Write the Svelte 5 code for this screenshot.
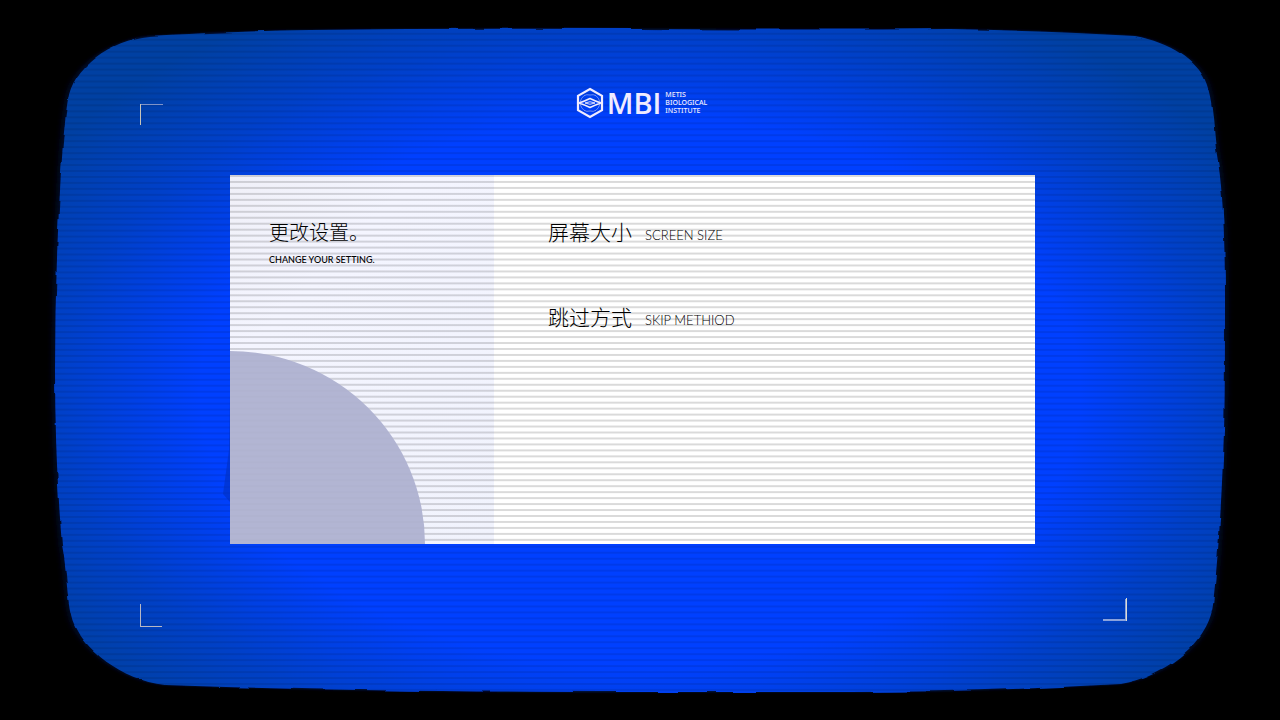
<script>
  const settings = [
    { label: '屏幕大小', note: 'SCREEN SIZE' },
    { label: '跳过方式', note: 'SKIP METHIOD' }
  ];
  // Raster lines, spaced like the rows of an old tube.
  const pitch = 5.965;
  const screenLines = Array.from({ length: 111 }, (_, i) => 32.8 + i * pitch);
  const panelLines = Array.from({ length: 62 }, (_, i) => i * pitch);
</script>

<div class="monitor">
  <svg class="layer" viewBox="0 0 1280 720" preserveAspectRatio="none" aria-hidden="true">
    <defs>
      <radialGradient id="glow" gradientUnits="userSpaceOnUse" cx="0" cy="0" r="1" gradientTransform="translate(640 392) scale(710 440)">
        <stop offset="0.62" stop-color="#0040ff" />
        <stop offset="0.82" stop-color="#0040c8" />
        <stop offset="1" stop-color="#0040a2" />
      </radialGradient>
      <filter id="ragged" x="-5%" y="-5%" width="110%" height="110%" color-interpolation-filters="sRGB">
        <feTurbulence type="fractalNoise" baseFrequency="0.02 0.06" numOctaves="2" seed="4" />
        <feDisplacementMap in="SourceGraphic" scale="4" xChannelSelector="R" yChannelSelector="G" />
      </filter>
      <filter id="soft" x="-5%" y="-5%" width="110%" height="110%">
        <feGaussianBlur stdDeviation="4 1" />
      </filter>
      <path id="tube" d="M150 36 C200 33 250 31 310 30 Q460 28 640 29 T950 29 Q1050 31 1135 36 C1170 42 1198 62 1205 80 C1214 100 1213 130 1217 155 Q1225 200 1225 300 T1224 430 Q1221 530 1213 605 C1208 645 1160 678 1120 684 Q980 692 850 692 T640 692 Q360 692 165 685 C120 680 84 648 74 624 C66 604 68 575 62 545 Q55 460 55 370 T60 190 Q63 130 68 100 C72 68 110 40 150 36 Z" />
    </defs>
    <use href="#tube" fill="#001a60" opacity="0.8" filter="url(#soft)" />
    <use href="#tube" fill="url(#glow)" filter="url(#ragged)" />
    <g opacity="0.08">
      {#each screenLines as y}
        <rect x="0" {y} width="1280" height="2" />
      {/each}
    </g>
    <g fill="none">
      <path d="M140 104.5H163" stroke="#7f93c8" />
      <path d="M140.500 104V125" stroke="#c8c4b8" />
      <path d="M140.500 604V627M140 626.500H162" stroke="#b8b8c4" />
      <path d="M1103 620H1127" stroke="#8aa2dc" stroke-width="2" />
      <path d="M1126.500 598V621" stroke="#dcdcd4" />
      <path d="M1125.500 599V621" stroke="#8aa2dc" />
    </g>
    <path d="M230 395 L229 450 L223 494 L230 502 Z" fill="#0030c0" opacity="0.6" />
  </svg>

  <header class="brand">
    <svg class="mark" viewBox="0 0 28 32" aria-hidden="true">
      <g fill="none" stroke="#f0ecff">
        <path d="M14 2 L26 8.800 V23.200 L14 30 L2 23.200 V8.800 Z" stroke-width="2.200" />
        <path d="M3 16 Q9 14 14 11.500 Q19 14 25 16 Q19 18 14 20.500 Q9 18 3 16 Z" stroke-width="1.500" />
        <path d="M9 16 Q14 13.500 19 16 Q14 18.500 9 16 Z" stroke-width="0.900" />
        <path d="M4 15 Q7 6 14 8 Q21 6 24 15 M4 17 Q7 26 14 24 Q21 26 24 17" stroke-width="0.900" opacity="0.5" />
      </g>
    </svg>
    <span class="initials">MBI</span>
    <span class="fullname">METIS<br />BIOLOGICAL<br />INSTITUTE</span>
  </header>

  <main class="panel">
    <aside class="intro">
      <h1>更改设置。</h1>
      <p>CHANGE YOUR SETTING.</p>
      <svg class="quarter" viewBox="0 0 195 193" aria-hidden="true">
        <path d="M0 0 A195 193 0 0 1 195 193 H0 Z" fill="#aeb1d0" />
      </svg>
    </aside>
    <section class="settings">
      {#each settings as item}
        <h2>{item.label}<small>{item.note}</small></h2>
      {/each}
    </section>
    <svg class="layer raster" viewBox="0 0 805 369" preserveAspectRatio="none" aria-hidden="true">
      {#each panelLines as y}
        <rect x="0" {y} width="805" height="2" />
      {/each}
    </svg>
  </main>
</div>

<style>
  :global(body) {
    margin: 0;
    background: #000;
  }
  .monitor {
    position: relative;
    box-sizing: border-box;
    min-height: 100vh;
    padding: 87px 245px 60px 230px;
    overflow: hidden;
    background: #000;
    color: #000;
    font-family: Lato, "Noto Sans CJK SC", sans-serif;
  }
  .layer {
    position: absolute;
    inset: 0;
    width: 100%;
    height: 100%;
  }
  .raster {
    z-index: 1;
    fill: #000;
    opacity: 0.14;
    pointer-events: none;
  }
  .brand {
    position: relative;
    display: flex;
    align-items: center;
    justify-content: center;
    height: 32px;
    padding-left: 18px;
    margin-bottom: 56px;
    color: #f0ecff;
  }
  .mark {
    width: 28px;
    height: 32px;
  }
  .initials {
    margin: 0 4px 0 3px;
    font: 700 29px/32px "Noto Sans CJK SC", sans-serif;
    font: 600 29px/32px "Open Sans", sans-serif;
  }
  .fullname {
    font: 500 7px/8px "Noto Sans", sans-serif;
  }
  .panel {
    position: relative;
    display: grid;
    grid-template-columns: 264fr 541fr;
    min-height: 369px;
    background: #fff;
  }
  .intro {
    position: relative;
    padding: 43px 39px;
    background: linear-gradient(135deg, #f0f0f8, #f4f5ff 30%, #f1f3fd);
  }
  h1,
  h2,
  p {
    position: relative;
    z-index: 2;
    margin: 0;
    white-space: nowrap;
  }
  h1 {
    font-size: 20px;
    line-height: 28px;
    font-weight: 300;
  }
  p {
    margin-top: 8px;
    font-size: 9px;
    line-height: 12px;
    font-weight: 500;
  }
  .quarter {
    position: absolute;
    z-index: 2;
    left: 0;
    bottom: 0;
    width: 195px;
    height: 193px;
    opacity: 0.93;
  }
  .settings {
    display: flex;
    flex-direction: column;
    gap: 57px;
    padding: 43px 54px;
  }
  h2 {
    display: flex;
    align-items: baseline;
    gap: 13px;
    height: 28px;
    font-size: 21px;
    line-height: 28px;
    font-weight: 300;
  }
  small {
    font-size: 13px;
    line-height: 16px;
  }
</style>
